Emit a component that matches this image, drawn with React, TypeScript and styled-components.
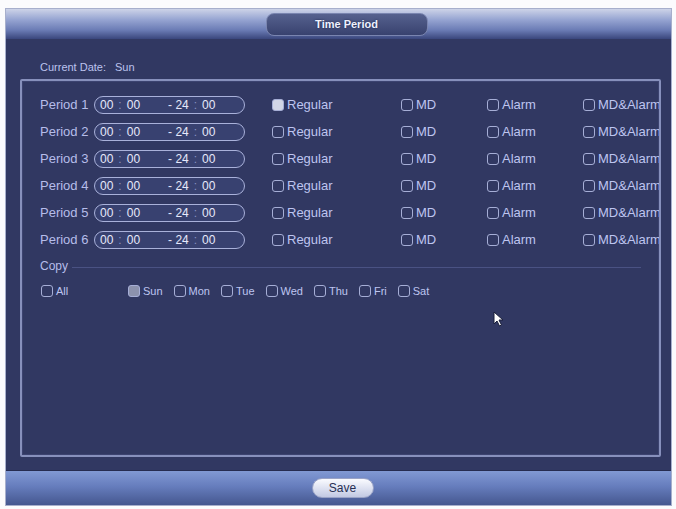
import React from 'react';
import styled, { createGlobalStyle } from 'styled-components';

const GlobalStyle = createGlobalStyle`
  body {
    margin: 0;
    background: #ffffff;
    font-family: "Liberation Sans", Arial, sans-serif;
  }
`;

const Screen = styled.div`
  position: relative;
  width: 676px;
  height: 509px;
  padding: 8px 4px 3px 5px;
  box-sizing: border-box;
  background: #fbfbfd;
`;

const Panel = styled.div`
  display: flex;
  flex-direction: column;
  height: 100%;
  border: 1px solid #a7afcc;
  box-sizing: border-box;
  background: #313862;
`;

const Header = styled.div`
  height: 30px;
  display: flex;
  align-items: center;
  justify-content: center;
  background: linear-gradient(#cdd3e8 0%, #97a5d2 35%, #6b7cb5 70%, #3a467c 100%);
`;

const TitlePill = styled.div`
  width: 160px;
  height: 21px;
  margin-left: 16px;
  border-radius: 8px;
  border: 1px solid #7a85b0;
  background: linear-gradient(#56618e, #38426f);
  color: #eef1ff;
  font-size: 11px;
  font-weight: bold;
  display: flex;
  align-items: center;
  justify-content: center;
  text-shadow: 0 0 2px #1c2347;
`;

const Body = styled.div`
  flex: 1;
  display: flex;
  flex-direction: column;
  padding: 0 10px 13px 14px;
  min-height: 0;
`;

const DateRow = styled.div`
  height: 40px;
  padding: 20px 0 0 20px;
  box-sizing: border-box;
  display: flex;
  gap: 9px;
  font-size: 11px;
  line-height: 16px;
  color: #bcc3ee;
`;

const SettingsBox = styled.div`
  flex: 1;
  border: 2px solid #8790bc;
  border-radius: 2px;
  padding: 10px 0 0 18px;
  overflow: hidden;
  box-shadow: inset 0 0 0 1px #3c4370;
`;

const PeriodRow = styled.div`
  display: grid;
  grid-template-columns: 54px 178px 129px 86px 96px 200px;
  align-items: center;
  height: 27px;
  white-space: nowrap;
`;

const RowLabel = styled.span`
  font-size: 13px;
  color: #b6bdea;
`;

const TimeField = styled.div`
  width: 151px;
  height: 18px;
  box-sizing: border-box;
  border: 1.5px solid #a9b1da;
  border-radius: 9px;
  background: #384170;
  display: flex;
  align-items: center;
  padding-left: 5px;
  font-size: 12px;
  color: #e6e9fb;
`;

const TimeSeg = styled.span<{ $offset: number }>`
  margin-left: ${(p) => p.$offset}px;
`;

const Sep = styled.span`
  color: #8991c0;
  margin: 0 5px;
`;

const Check = styled.label<{ $size?: number }>`
  display: inline-flex;
  align-items: center;
  gap: 3px;
  font-size: ${(p) => p.$size ?? 13}px;
  color: #bec5f0;
`;

const Box = styled.span<{ $fill?: string }>`
  width: 12px;
  height: 12px;
  flex: none;
  box-sizing: border-box;
  border: 1.5px solid #a6aed6;
  border-radius: 3px;
  background: ${(p) => p.$fill ?? 'transparent'};
`;

const CopyRow = styled.div`
  height: 26px;
  display: flex;
  align-items: center;
  gap: 4px;
  padding-right: 18px;
  font-size: 12px;
  color: #b6bdea;
`;

const Rule = styled.div`
  flex: 1;
  height: 1px;
  margin-top: 3px;
  background: #4a5283;
`;

const DayRow = styled.div`
  height: 24px;
  display: flex;
  align-items: center;
  padding-left: 1px;
`;

const AllCell = styled.div`
  width: 87px;
  display: flex;
`;

const Days = styled.div`
  display: flex;
  gap: 11px;
`;

const Footer = styled.div`
  height: 34px;
  display: flex;
  align-items: center;
  justify-content: center;
  border-top: 1px solid #262c50;
  background: linear-gradient(#8199d3 0%, #667dbd 45%, #45578f 100%);
`;

const SaveButton = styled.button`
  width: 62px;
  height: 20px;
  margin-left: 8px;
  border: 1px solid #9aa3c6;
  border-radius: 10px;
  background: linear-gradient(#fafbff, #c2c9e3);
  color: #283054;
  font-family: "Liberation Sans", Arial, sans-serif;
  font-size: 12px;
  padding: 0;
`;

const Pointer = styled.svg`
  position: absolute;
  left: 493px;
  top: 311px;
`;

const periods = [1, 2, 3, 4, 5, 6];
const days = ['Sun', 'Mon', 'Tue', 'Wed', 'Thu', 'Fri', 'Sat'];

const CheckItem: React.FC<{ text: string; fill?: string; size?: number }> = ({ text, fill, size }) => (
  <Check $size={size}>
    <Box $fill={fill} />
    {text}
  </Check>
);

const App: React.FC = () => (
  <Screen>
    <GlobalStyle />
    <Panel>
      <Header>
        <TitlePill>Time Period</TitlePill>
      </Header>
      <Body>
        <DateRow>
          <span>Current Date:</span>
          <span>Sun</span>
        </DateRow>
        <SettingsBox>
          {periods.map((n) => (
            <PeriodRow key={n}>
              <RowLabel>{`Period ${n}`}</RowLabel>
              <TimeField>
                <TimeSeg $offset={0}>00</TimeSeg>
                <Sep>:</Sep>
                <span>00</span>
                <TimeSeg $offset={28}>- 24</TimeSeg>
                <Sep>:</Sep>
                <span>00</span>
              </TimeField>
              <CheckItem text="Regular" fill={n === 1 ? '#d2d6e6' : undefined} />
              <CheckItem text="MD" />
              <CheckItem text="Alarm" />
              <CheckItem text="MD&Alarm" />
            </PeriodRow>
          ))}
          <CopyRow>
            Copy
            <Rule />
          </CopyRow>
          <DayRow>
            <AllCell>
              <CheckItem text="All" size={11} />
            </AllCell>
            <Days>
              {days.map((d) => (
                <CheckItem key={d} text={d} size={11} fill={d === 'Sun' ? '#8c92ad' : undefined} />
              ))}
            </Days>
          </DayRow>
        </SettingsBox>
      </Body>
      <Footer>
        <SaveButton>Save</SaveButton>
      </Footer>
    </Panel>
    <Pointer width="11" height="16" viewBox="0 0 11 16">
      <path d="M1 1 L1 13 L4 10 L6.5 15 L8.5 14 L6 9 L10 9 Z" fill="#ffffff" stroke="#1a1f3a" strokeWidth="1" />
    </Pointer>
  </Screen>
);

export default App;
